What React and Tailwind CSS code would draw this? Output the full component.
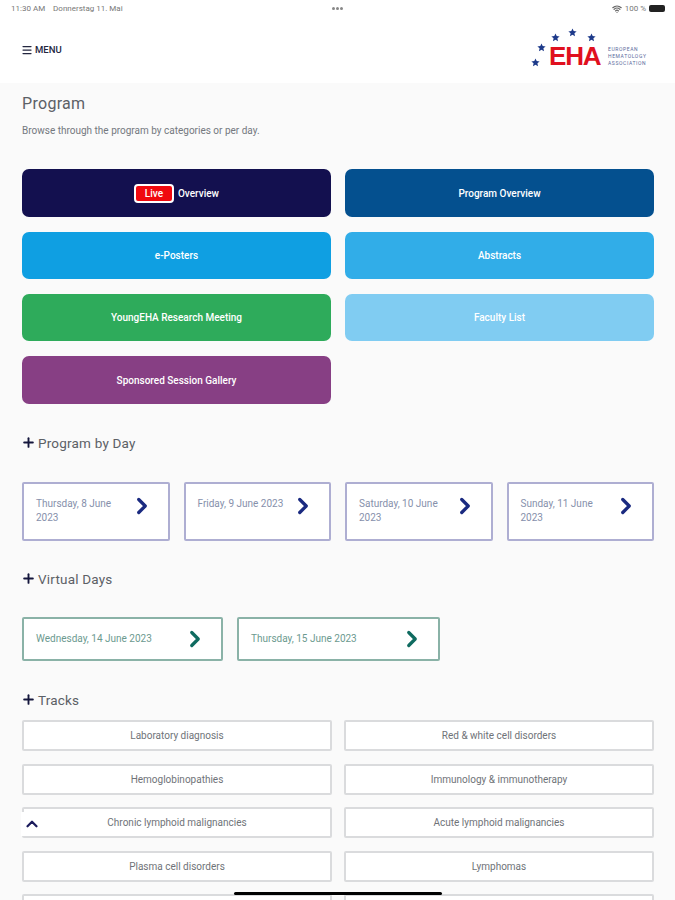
import { Menu, Plus, ChevronRight, ChevronUp, Wifi } from 'lucide-react';

const Star = ({ className }) => (
  <svg className={className} viewBox="0 0 24 24" fill="#1d3a8a">
    <path d="M12 1l3.2 7.2 7.8.8-5.9 5.2 1.7 7.8L12 18l-6.8 4 1.7-7.8L1 9l7.8-.8z" />
  </svg>
);

const Logo = () => (
  <div className="relative w-[116px] h-[44px]">
    <Star className="absolute left-0 top-[30px] w-[9px] h-[9px]" />
    <Star className="absolute left-[6px] top-[15px] w-[9px] h-[9px]" />
    <Star className="absolute left-[20px] top-[5px] w-[9px] h-[9px]" />
    <Star className="absolute left-[37px] top-0 w-[9px] h-[9px]" />
    <Star className="absolute left-[56px] top-[5px] w-[9px] h-[9px]" />
    <span className="absolute left-[18px] top-[13px] text-[26px] leading-[30px] tracking-[-1.2px] font-bold text-[#e0101e] font-['Liberation_Sans',sans-serif]">EHA</span>
    <div className="absolute left-[77px] top-[18px] text-[5px] leading-[7px] tracking-[0.6px] text-[#5a6a9c]">
      <div>EUROPEAN</div>
      <div>HEMATOLOGY</div>
      <div>ASSOCIATION</div>
    </div>
  </div>
);

const BigButton = ({ color, children }) => (
  <div className={`h-[47.5px] rounded-[7px] flex items-center justify-center text-white text-[10px] font-medium ${color}`}>
    {children}
  </div>
);

const SectionTitle = ({ children }) => (
  <div className="flex items-center gap-[2px] -ml-[1px] text-[13.5px] leading-[20px] tracking-[0.2px] text-[#5c6066]">
    <Plus size={15} strokeWidth={3} className="text-[#14163c]" />
    <span>{children}</span>
  </div>
);

const DayCard = ({ label }) => (
  <div className="h-[59px] bg-white border-2 border-[#aeaed2] rounded-[2px] pl-[12px] pr-[14px] pt-[13px] flex justify-between items-start">
    <span className="text-[10px] leading-[14px] text-[#8690ab] w-[92px]">{label}</span>
    <ChevronRight size={26} strokeWidth={3} className="text-[#1a2a80] -mt-[4px] -mr-[1px] shrink-0" />
  </div>
);

const VirtualCard = ({ label }) => (
  <div className="h-[44px] bg-white border-2 border-[#8ab2a7] rounded-[2px] pl-[12px] pr-[13px] flex items-center justify-between">
    <span className="text-[10px] text-[#6c9a8f]">{label}</span>
    <ChevronRight size={26} strokeWidth={3} className="text-[#0f6b60]" />
  </div>
);

const TrackCard = ({ label }) => (
  <div className="h-[31px] bg-white border-2 border-[#dadbdd] rounded-[2px] flex items-center justify-center text-[10px] text-[#6f7378]">
    {label}
  </div>
);

const tracks = [
  'Laboratory diagnosis',
  'Red & white cell disorders',
  'Hemoglobinopathies',
  'Immunology & immunotherapy',
  'Chronic lymphoid malignancies',
  'Acute lymphoid malignancies',
  'Plasma cell disorders',
  'Lymphomas',
  '',
  '',
];

export default function App() {
  return (
    <div className="relative w-[675px] h-[900px] overflow-hidden bg-[#fafafa] font-['Roboto',sans-serif]">
      {/* Status bar */}
      <div className="h-[17px] bg-white flex items-center justify-between pl-[11px] pr-[10px] text-[8px] text-[#777] relative">
        <div className="flex gap-[8px]">
          <span>11:30 AM</span>
          <span>Donnerstag 11. Mai</span>
        </div>
        <div className="absolute left-[332px] top-[7px] flex gap-[1px]">
          <div className="w-[3px] h-[3px] rounded-full bg-[#888]" />
          <div className="w-[3px] h-[3px] rounded-full bg-[#888]" />
          <div className="w-[3px] h-[3px] rounded-full bg-[#888]" />
        </div>
        <div className="flex items-center gap-[3px]">
          <Wifi size={10} strokeWidth={3} className="text-[#666]" />
          <span>100 %</span>
          <div className="w-[16px] h-[7px] rounded-[2px] bg-[#222]" />
        </div>
      </div>

      {/* Header */}
      <div className="h-[66px] bg-white flex items-center justify-between pl-[21px] pr-[28px]">
        <div className="flex items-center gap-[2px] text-[9.5px] font-medium text-[#23263f]">
          <Menu size={12} strokeWidth={2.5} />
          <span>MENU</span>
        </div>
        <Logo />
      </div>

      {/* Content */}
      <div className="pl-[22px] pr-[21px]">
        <h1 className="mt-[11px] text-[16px] leading-[20px] tracking-[0.3px] text-[#5c6066]">Program</h1>
        <p className="mt-[10px] text-[10px] leading-[14px] text-[#74787e]">Browse through the program by categories or per day.</p>

        <div className="mt-[31.4px] grid grid-cols-2 gap-x-[14px] gap-y-[14.8px]">
          <BigButton color="bg-[#13104f]">
            <span className="bg-[#f0090f] border-2 border-white rounded-[4px] w-[40px] h-[19px] flex items-center justify-center mr-[4px]">Live</span>
            <span>Overview</span>
          </BigButton>
          <BigButton color="bg-[#04508f]">Program Overview</BigButton>
          <BigButton color="bg-[#0f9fe2]">e-Posters</BigButton>
          <BigButton color="bg-[#31ade8]">Abstracts</BigButton>
          <BigButton color="bg-[#2eab5b]">YoungEHA Research Meeting</BigButton>
          <BigButton color="bg-[#80ccf2]">Faculty List</BigButton>
          <BigButton color="bg-[#873f84]">Sponsored Session Gallery</BigButton>
        </div>

        <div className="mt-[29.2px]">
          <SectionTitle>Program by Day</SectionTitle>
        </div>
        <div className="mt-[29px] grid grid-cols-4 gap-[14px]">
          <DayCard label="Thursday, 8 June 2023" />
          <DayCard label="Friday, 9 June 2023" />
          <DayCard label="Saturday, 10 June 2023" />
          <DayCard label="Sunday, 11 June 2023" />
        </div>

        <div className="mt-[28px]">
          <SectionTitle>Virtual Days</SectionTitle>
        </div>
        <div className="mt-[28px] flex gap-[14px]">
          <div className="w-[201px]"><VirtualCard label="Wednesday, 14 June 2023" /></div>
          <div className="w-[203px]"><VirtualCard label="Thursday, 15 June 2023" /></div>
        </div>

        <div className="mt-[29px]">
          <SectionTitle>Tracks</SectionTitle>
        </div>
        <div className="mt-[10px] grid grid-cols-2 gap-x-[12px] gap-y-[12.6px]">
          {tracks.map((t, i) => <TrackCard key={i} label={t} />)}
        </div>
      </div>

      {/* Scroll to top */}
      <div className="absolute left-[21px] top-[812px] w-[22px] h-[24px] bg-white flex items-center justify-center">
        <ChevronUp size={18} strokeWidth={3} className="text-[#1b1b5c]" />
      </div>

      {/* Home indicator */}
      <div className="absolute left-[234px] top-[892px] w-[208px] h-[3px] rounded-full bg-black" />
    </div>
  );
}
